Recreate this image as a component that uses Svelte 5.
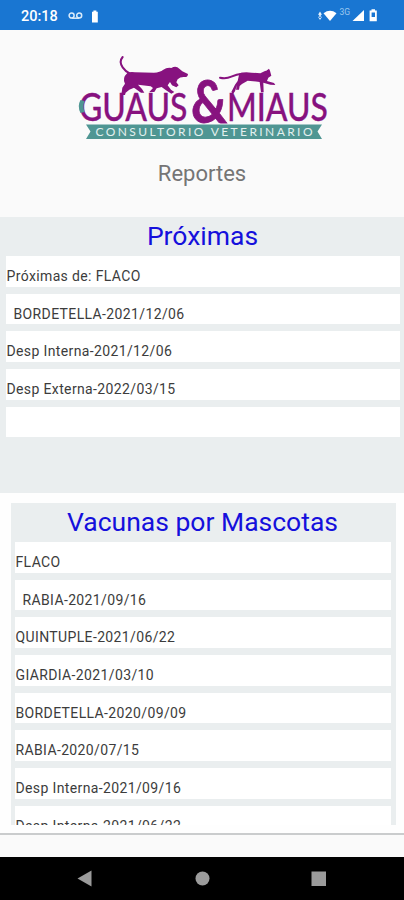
<script lang="ts">
  const upcoming: { text: string; indent?: boolean }[] = [
    { text: 'Próximas de: FLACO' },
    { text: 'BORDETELLA-2021/12/06', indent: true },
    { text: 'Desp Interna-2021/12/06' },
    { text: 'Desp Externa-2022/03/15' },
    { text: '' }
  ];

  const vaccines: { text: string; indent?: boolean }[] = [
    { text: 'FLACO' },
    { text: 'RABIA-2021/09/16', indent: true },
    { text: 'QUINTUPLE-2021/06/22' },
    { text: 'GIARDIA-2021/03/10' },
    { text: 'BORDETELLA-2020/09/09' },
    { text: 'RABIA-2020/07/15' },
    { text: 'Desp Interna-2021/09/16' },
    { text: 'Desp Interna-2021/06/22' }
  ];
</script>

<div class="screen">
  <header class="status">
    <span class="time">20:18</span>
    <svg class="voicemail" width="15" height="8" viewBox="0 0 15 8">
      <circle cx="3.6" cy="3.6" r="2.5" />
      <circle cx="11.2" cy="3.6" r="2.5" />
      <path d="M3.6 6.2h7.6" />
    </svg>
    <svg class="solid" width="8" height="13" viewBox="0 0 8 13">
      <path d="M2.4 0.5h3v1.3h1.4v10.7H1V1.8h1.4z" />
    </svg>
    <div class="signals">
      <svg class="solid" width="62" height="16" viewBox="0 0 62 16">
        <path d="M2 3.500l2 3.300H0zM2 12l2-3.300H0zM1.200 6h1.600v4H1.200z" opacity="0.9" />
        <path d="M5.500 5.200Q12 .3 18.500 5.200L12 13z" />
        <text x="21.500" y="7">3G</text>
        <path d="M46 2v11H34.500z" />
        <path fill-rule="evenodd" d="M53.500 1.200h3.500v1.300h1.800v10.800h-7.200V2.500h1.900zM53.600 4.500v4.500h3.400V4.500z" />
      </svg>
    </div>
  </header>

  <section class="brand">
    <svg class="logo" width="265" height="100" viewBox="70 45 265 100">
      <!-- dog -->
      <g transform="translate(70 45) scale(.3333)">
        <path class="tail" d="M158 36q-12 14 0 31q8 12 22 19" />
        <path
          class="ink"
          d="M172 84Q182 79 195 82L252 83Q270 82 280 74Q290 67 304 69Q318 61 328 71L337 79L354 87Q354 98 341 96Q330 96 323 103L319 112L326 121L319 127L306 121L300 111L293 121L303 134L313 141L304 146L287 135L275 126L260 130L253 141H238L249 129L242 124L204 119L216 132L223 143H213L192 128L178 134L167 143L165 150H154L157 128L165 116Q156 99 172 84z"
        />
      </g>
      <!-- cat -->
      <g transform="translate(200 45) scale(.3333)">
        <path class="tail" d="M60 98q18 4 34-3t32-9" />
        <path
          class="ink"
          d="M119 85Q134 79 155 83L181 85L195 78L199 77L207 71L210 77L214 92L205 98L201 108L222 114L226 120L211 119L190 113L191 142H183L179 111L143 107L126 117L119 123L117 134L108 134L111 120L105 139L99 147L94 141L105 119L113 108Q116 92 119 85z"
        />
      </g>
      <g class="ink name">
        <text x="79" y="120.500" font-size="38.500" textLength="108.500" lengthAdjust="spacingAndGlyphs">GUAUS</text>
        <text class="amp" x="191" y="123" font-size="59" textLength="36" lengthAdjust="spacingAndGlyphs">&amp;</text>
        <text x="227" y="120.500" font-size="38.500" textLength="101" lengthAdjust="spacingAndGlyphs">MIAUS</text>
      </g>
      <path class="teal" d="M80.500 100q-3.500 6 0 13l4-1q-2-5.500 0-11z" />
      <path class="teal" d="M86 124.500H322L317.500 131.500L322 139H86L90.500 131.500z" />
      <text class="tagline" x="95.500" y="136" textLength="217">CONSULTORIO VETERINARIO</text>
    </svg>
    <h1>Reportes</h1>
  </section>

  <main>
    <section class="panel upcoming">
      <h2>Próximas</h2>
      <ul>
        {#each upcoming as row}
          <li class:indent={row.indent}>{row.text}</li>
        {/each}
      </ul>
    </section>

    <section class="panel vaccines">
      <h2>Vacunas por Mascotas</h2>
      <ul>
        {#each vaccines as row}
          <li class:indent={row.indent}>{row.text}</li>
        {/each}
      </ul>
    </section>
  </main>

  <nav>
    <svg width="404" height="43" viewBox="0 0 404 43">
      <path d="M77.500 21.500L91.500 13.500v16z" />
      <circle cx="202.500" cy="21.500" r="7" />
      <rect x="311.500" y="14.500" width="14.500" height="14.500" />
    </svg>
  </nav>
</div>

<style>
  :global(body) {
    margin: 0;
  }

  .screen {
    display: flex;
    flex-direction: column;
    width: 404px;
    height: 900px;
    overflow: hidden;
    background: #fafafa;
    font-family: Roboto, sans-serif;
  }

  .status {
    display: flex;
    align-items: center;
    box-sizing: border-box;
    height: 30px;
    padding: 2px 24px 0 21px;
    background: #1976d2;
    color: #fff;
  }

  .time {
    width: 47px;
    font-size: 14.5px;
    font-weight: 500;
  }

  .voicemail {
    margin-right: 8px;
    fill: none;
    stroke: #d8eafa;
    stroke-width: 1.5;
  }

  .solid {
    fill: #fff;
  }

  .solid text {
    font-size: 8.5px;
    fill: #9dc8ef;
  }

  .signals {
    display: flex;
    margin-left: auto;
  }

  /* Logo */
  .brand {
    display: flex;
    flex-direction: column;
    align-items: center;
    height: 187px;
  }

  .logo {
    margin-top: 15px;
    flex: none;
    overflow: visible;
  }

  .ink {
    fill: #87127f;
  }

  .tail {
    fill: none;
    stroke: #87127f;
    stroke-width: 6;
    stroke-linecap: round;
  }

  .teal {
    fill: #4f9693;
  }

  .name {
    font-family: Lato, sans-serif;
    font-weight: 500;
    stroke: #87127f;
    stroke-width: 0.3;
  }

  .amp {
    font-weight: 700;
    stroke-width: 0.8;
  }

  .tagline {
    fill: #e3f0ef;
    font-family: Lato, sans-serif;
    font-size: 12px;
  }

  h1 {
    margin: 15px 0 0;
    font-size: 22px;
    line-height: 28px;
    font-weight: 400;
    color: #757575;
  }

  /* Lists */
  main {
    box-sizing: border-box;
    height: 618px;
    background: #fefefe;
    border-bottom: 2px solid #cacccd;
  }

  .panel {
    box-sizing: border-box;
    overflow: hidden;
    background: #eaeeef;
  }

  .upcoming {
    height: 276px;
    padding: 0 4px 0 6px;
  }

  .vaccines {
    height: 322px;
    margin: 10px 8px 0 11px;
    padding: 0 5px 0 4px;
  }

  h2 {
    margin: 0 1px 0 0;
    height: 39px;
    font-size: 26.5px;
    line-height: 38px;
    font-weight: 400;
    text-align: center;
    color: #1510dc;
  }

  ul {
    display: flex;
    flex-direction: column;
    gap: 7px;
    margin: 0;
    padding: 0;
    list-style: none;
  }

  li {
    box-sizing: border-box;
    flex: none;
    height: 30.7px;
    padding: 11px 0 0 0.5px;
    background: #fff;
    font-size: 14px;
    line-height: 19px;
    letter-spacing: 0.37px;
    color: #3c3c3c;
    white-space: pre;
  }

  .indent {
    padding-left: 7.5px;
  }

  nav {
    height: 43px;
    margin-top: auto;
    background: #000;
  }

  nav svg {
    display: block;
    fill: #9b9b9b;
  }
</style>
